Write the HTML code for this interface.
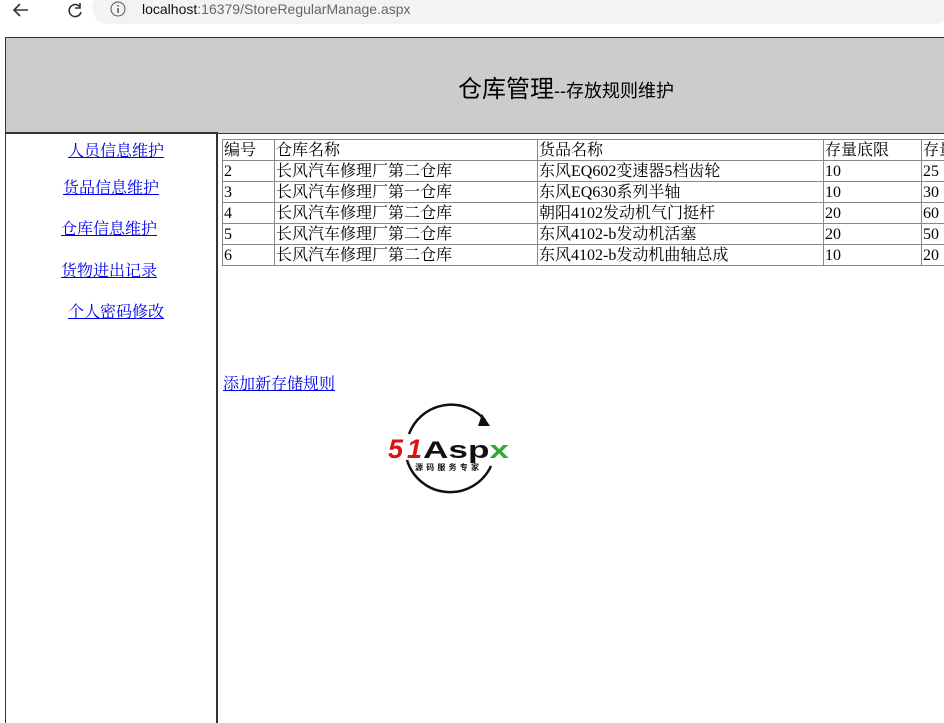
<!DOCTYPE html>
<html><head><meta charset="utf-8"><style>
body{margin:0;width:944px;height:708px;overflow:hidden;background:#fff;font-family:"Liberation Serif","Noto Serif CJK SC","WenQuanYi Zen Hei",serif;position:relative}
.bar{position:absolute;left:0;top:0;width:944px;height:30px;background:#fff}
.url{position:absolute;left:92px;top:-8px;width:860px;height:32px;background:#f1f3f4;border-radius:16px}
.url span{position:absolute;left:50px;top:9px;font:14px "Liberation Sans",sans-serif;color:#666}
.url b{font-weight:normal;color:#111}
.hdr{position:absolute;left:5px;top:37px;width:945px;height:95px;background:#ccc;border:1px solid #333;border-right:none}
.hdr div{position:absolute;left:452px;top:31px;font-family:"Liberation Sans","Noto Sans CJK SC",sans-serif;font-size:24px;color:#000}
.hdr small{font-size:18px}
.side{position:absolute;left:5px;top:132px;width:210px;height:590px;border-left:1px solid #333;border-right:2px solid #333;border-top:1px solid #333}
a{color:#00e;position:absolute;font-size:16px;font-family:"Liberation Serif","Noto Serif CJK SC",serif;text-decoration:underline;line-height:18px}
table{position:absolute;left:222px;top:139px;border-collapse:collapse;font-size:16px;table-layout:fixed;width:740px}
td{border:1px solid #888;height:19px;padding:1px 1px 0;line-height:19px;white-space:nowrap;overflow:hidden;box-sizing:content-box}
</style></head><body>
<div class="bar"><svg style="position:absolute;left:10px;top:2px" width="80" height="18"><path d="M18 8H4M10 2L4 8l6 6" stroke="#333" stroke-width="1.6" fill="none"/><path d="M70 5a6 6 0 1 0 1 5M70 1v5h-5" stroke="#333" stroke-width="1.6" fill="none"/></svg>
<div class="url"><svg style="position:absolute;left:18px;top:9px" width="16" height="16"><circle cx="8" cy="8" r="7" stroke="#555" fill="none"/><path d="M8 7v5M8 4v1.5" stroke="#555" stroke-width="1.5"/></svg><span><b>localhost</b>:16379/StoreRegularManage.aspx</span></div></div>
<div class="hdr"><div>仓库管理<small>--存放规则维护</small></div></div>
<div class="side"></div>
<a style="left:68px;top:143px">人员信息维护</a>
<a style="left:63px;top:180px">货品信息维护</a>
<a style="left:61px;top:221px">仓库信息维护</a>
<a style="left:61px;top:263px">货物进出记录</a>
<a style="left:68px;top:304px">个人密码修改</a>
<table>
<colgroup><col style="width:52px"><col style="width:263px"><col style="width:286px"><col style="width:98px"><col style="width:41px"></colgroup>
<tr><td>编号</td><td>仓库名称</td><td>货品名称</td><td>存量底限</td><td>存量</td></tr>
<tr><td>2</td><td>长风汽车修理厂第二仓库</td><td>东风EQ602变速器5档齿轮</td><td>10</td><td>25</td></tr>
<tr><td>3</td><td>长风汽车修理厂第一仓库</td><td>东风EQ630系列半轴</td><td>10</td><td>30</td></tr>
<tr><td>4</td><td>长风汽车修理厂第二仓库</td><td>朝阳4102发动机气门挺杆</td><td>20</td><td>60</td></tr>
<tr><td>5</td><td>长风汽车修理厂第二仓库</td><td>东风4102-b发动机活塞</td><td>20</td><td>50</td></tr>
<tr><td>6</td><td>长风汽车修理厂第二仓库</td><td>东风4102-b发动机曲轴总成</td><td>10</td><td>20</td></tr>
</table>
<a style="left:223px;top:376px">添加新存储规则</a>
<svg style="position:absolute;left:385px;top:400px" width="130" height="96">
<path d="M24 34A45 45 0 0 1 100 20M106 66A45 45 0 0 1 22 60" stroke="#111" stroke-width="2.5" fill="none"/>
<path d="M97 14l8 12-12 0z" fill="#111"/>
<text x="3" y="58" font-family="Liberation Sans,sans-serif" font-weight="bold" font-style="italic" font-size="27" fill="#d11" textLength="34">51</text>
<text x="38" y="58" font-family="Liberation Sans,sans-serif" font-weight="bold" font-size="24" fill="#111" textLength="86" lengthAdjust="spacingAndGlyphs">Asp<tspan fill="#3a3">x</tspan></text>
<text x="30" y="70" font-family="Noto Sans CJK SC,sans-serif" font-weight="bold" font-size="8" fill="#111" textLength="64">源码服务专家</text>
</svg>
</body></html>
